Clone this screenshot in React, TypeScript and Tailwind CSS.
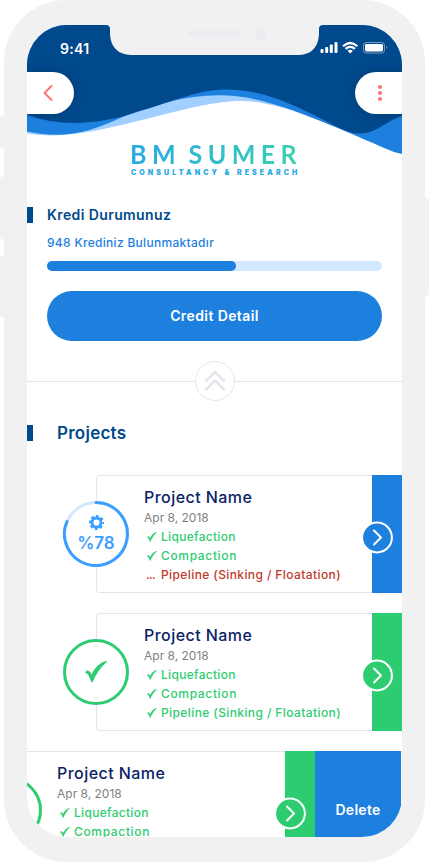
import React from "react";

const projects = [
  { done: false, items: ["Liquefaction", "Compaction", "Pipeline (Sinking / Floatation)"] },
  { done: true, items: ["Liquefaction", "Compaction", "Pipeline (Sinking / Floatation)"] },
];

function Waves() {
  return (
    <svg className="absolute left-0 top-0" width="375" height="140" viewBox="27 25 375 140">
      <path fill="#a1cfff" d="M27 25V133.500C65 140 105 129 150 118C200 105 233 97 262 103C290 108 320 120 345 130V25Z" />
      <path fill="#1d80df" d="M27 25V131.500C65 139 88 133 125 116C163 101 212 87 262 101C300 110 360 138 394 152L402 154V25Z" />
      <path fill="#00498d" d="M27 25V115C60 127 100 125 140 111C178 100 197 89.500 228 89.500C275 89.500 320 120 346 131C373 140 382 122 402 116V25Z" />
    </svg>
  );
}

function Check({ className, size = 10 }: { className?: string; size?: number }) {
  return (
    <svg className={className} width={size} height={size} viewBox="0 0 22 22" fill="currentColor" stroke="currentColor" strokeWidth="1" strokeLinejoin="round">
      <path d="M.5 11.500C2 9 5 9.500 6.500 14.500C10 7 15 1.500 21.500 .5C15 6.500 10.500 13 7 21.200C5 17 4 12 .5 11.500Z" />
    </svg>
  );
}

function Arrow({ green }: { green: boolean }) {
  return (
    <svg className="absolute -left-[11px] top-[46px]" width="33" height="33" viewBox="0 0 33 33">
      <circle cx="16" cy="16.500" r="14.900" fill={green ? "#2ecc71" : "#1d80df"} stroke="#fff" strokeWidth="2" />
      <path d="M13 9.500L20 16.500L13 23.500" fill="none" stroke="#fff" strokeWidth="2" strokeLinecap="round" strokeLinejoin="round" />
    </svg>
  );
}

function Details({ items, pending }: { items: string[]; pending?: boolean }) {
  return (
    <div className="flex flex-col pt-[9px]">
      <div className="h-6 whitespace-nowrap text-base font-medium leading-6 tracking-[0.45px] text-[#0b2265]">Project Name</div>
      <div className="h-[18px] text-xs leading-[18px] text-[#7f7f7f]">Apr 8, 2018</div>
      {items.map((item, i) => {
        const open = pending && i === 2;
        return (
          <div key={item} className={`flex h-[19px] items-center whitespace-nowrap text-xs font-medium ${open ? "text-[#c0392b]" : "text-[#2ecc71]"}`}>
            <span className="flex w-[17px] pl-[2px] tracking-[-0.6px]">{open ? "..." : <Check className="ml-px" />}</span>
            <span className={item === "Compaction" ? "tracking-[0.65px]" : item === "Liquefaction" ? "tracking-[0.3px]" : "tracking-[0.4px]"}>{item}</span>
          </div>
        );
      })}
    </div>
  );
}

export default function App() {
  return (
    <div className="relative h-[862px] w-[429px] overflow-hidden bg-white px-1 font-['Inter',sans-serif]">
      <i className="absolute left-0 top-[115px] h-[34px] w-3 rounded bg-[#f1f1f1]" />
      <i className="absolute left-0 top-[176px] h-[64px] w-3 rounded bg-[#f1f1f1]" />
      <i className="absolute left-0 top-[255px] h-[63px] w-3 rounded bg-[#f1f1f1]" />
      <i className="absolute right-0 top-[198px] h-[99px] w-3 rounded bg-[#f1f1f1]" />
      <div className="relative h-[862px] w-[421px] rounded-[62px] bg-[#f1f1f1] px-[23px] pt-[25px]">
        <div className="relative h-[812px] w-[375px] overflow-hidden rounded-[40px] bg-white">
          <Waves />
          <header className="relative flex h-[47px] justify-between">
            <span className="pl-[33px] pt-[14px] text-[14px] font-semibold leading-5 tracking-[0.3px] text-white">9:41</span>
            <svg className="absolute left-[79px] top-0" width="217" height="30" viewBox="0 0 217 30">
              <path fill="#f1f1f1" d="M0 0Q4 0 4 4V9Q5 29 25 30H193Q212 29 213 9V4Q213 0 217 0Z" />
              <rect x="82" y="6" width="53" height="6" rx="3" fill="#ebebf0" />
              <circle cx="155" cy="9" r="6" fill="#ebebf0" />
            </svg>
            <svg className="mr-[14px] mt-[16px]" width="68" height="14" viewBox="0 0 68 14" fill="white">
              <rect x="0.500" y="8" width="3" height="4" rx="1" /><rect x="5.200" y="6" width="3" height="6" rx="1" />
              <rect x="9.800" y="3.500" width="3" height="8.500" rx="1" /><rect x="14.500" y="1" width="3" height="11" rx="1" />
              <path fill="none" stroke="white" strokeWidth="2.200" d="M23 5.200Q30.200 -1.200 37.400 5.200M25.500 7.900Q30.200 3.900 34.900 7.900" />
              <path d="M27.500 9.800Q30.200 7.800 32.900 9.800L30.200 12.500Z" />
              <rect x="43.500" y="1.500" width="21" height="10.500" rx="2.700" fill="none" stroke="white" strokeOpacity=".45" />
              <rect x="45" y="3" width="18" height="7.500" rx="1.400" /><path opacity=".7" d="M66 5Q67.700 6.500 66 8Z" />
            </svg>
          </header>
          <nav className="relative flex h-[42px] justify-between">
            <button className="h-[42px] w-[47px] rounded-r-full bg-white pl-[16px] shadow-[0_0_10px_rgba(0,0,0,0.2)]">
              <svg width="10" height="18" viewBox="0 0 10 18"><path d="M8.500 2L1.500 9L8.500 16" fill="none" stroke="#ff7272" strokeWidth="2" strokeLinecap="round" strokeLinejoin="round" /></svg>
            </button>
            <button className="flex h-[42px] w-[47px] flex-col items-center justify-center gap-[2.300px] rounded-l-full bg-white pl-[2px] shadow-[0_0_10px_rgba(0,0,0,0.2)]">
              <i className="size-1 rounded-full bg-[#ff7272]" /><i className="size-1 rounded-full bg-[#ff7272]" /><i className="size-1 rounded-full bg-[#ff7272]" />
            </button>
          </nav>
          <div className="relative flex h-[76px] flex-col pl-[103px] pt-[26px]">
            <div className="h-[28px] w-[186px] origin-left scale-x-[0.945] whitespace-nowrap bg-gradient-to-r from-[#29aae2] to-[#3fd0ae] bg-clip-text font-['Lato',sans-serif] text-[26.500px] font-bold leading-[28px] tracking-[5.700px] text-transparent [word-spacing:-4px]">BM SUMER</div>
            <div className="h-2 whitespace-nowrap pl-px font-['Inter',sans-serif] text-[7px] font-black leading-[10px] tracking-[3.100px] text-[#29aae2]">CONSULTANCY &amp; RESEARCH</div>
          </div>
          <section className="flex flex-col">
            <div className="mt-[17px] flex h-4 items-center gap-[14px]">
              <i className="h-4 w-[6px] bg-[#00498d]" />
              <h2 className="whitespace-nowrap text-[14px] font-semibold leading-4 tracking-[0.4px] text-[#00498d]">Kredi Durumunuz</h2>
            </div>
            <p className="ml-5 mt-[11px] h-[18px] whitespace-nowrap text-xs font-medium leading-[18px] tracking-[0.3px] text-[#1d80df]">948 Krediniz Bulunmaktadır</p>
            <div className="mx-5 mt-[9px] h-[10px] rounded-full bg-[#d2e8ff]"><div className="h-full w-[189px] rounded-full bg-[#1d80df]" /></div>
            <button className="mx-5 mt-5 h-[50px] rounded-full bg-[#1d80df] pb-px text-[14px] font-semibold tracking-[0.4px] text-white">Credit Detail</button>
            <div className="mt-5 flex h-10 items-center">
              <i className="h-px w-[168px] bg-[#e4e4ea]" />
              <svg width="40" height="40" viewBox="0 0 40 40" fill="none">
                <circle cx="20" cy="20" r="19.500" stroke="#e6e6ee" />
                <path d="M11 20L20 11L29 20M11 28.500L20 19.500L29 28.500" stroke="#e6e6ee" strokeWidth="2.600" strokeLinecap="round" strokeLinejoin="round" />
              </svg>
              <i className="h-px flex-1 bg-[#e4e4ea]" />
            </div>
          </section>
          <section className="flex flex-col">
            <div className="mt-6 flex h-4 items-center gap-6">
              <i className="h-4 w-[6px] bg-[#00498d]" />
              <h2 className="text-[17px] font-semibold leading-4 tracking-[0.25px] text-[#00498d]">Projects</h2>
            </div>
            <div className="mt-[34px] flex flex-col gap-5">
              {projects.map((p, i) => (
                <article key={i} className="relative ml-[69px] flex h-[118px] justify-between rounded-l border border-r-0 border-[#e4e4ea] pl-[47px]">
                  <div className="absolute -left-[34px] top-[25px] size-[66px] rounded-full bg-white">
                    <svg className="absolute" width="66" height="66" viewBox="0 0 66 66" fill="none">
                      <circle cx="33" cy="33" r="31.500" stroke={p.done ? "#2ecc71" : "#d2e8ff"} strokeWidth="3" />
                      {!p.done && <path d="M33 1.500A31.500 31.500 0 1 1 4 20.500" stroke="#3d9eff" strokeWidth="3" strokeLinecap="round" />}
                    </svg>
                    {p.done ? (
                      <Check className="absolute left-[22px] top-[22px] text-[#2ecc71]" size={22} />
                    ) : (
                      <div className="flex flex-col items-center pt-[14px] text-[#3d9eff]">
                        <svg width="15" height="15" viewBox="0 0 14 14" fill="none" stroke="currentColor">
                          <circle cx="7" cy="7" r="4.200" strokeWidth="2.600" />
                          <circle cx="7" cy="7" r="6" strokeWidth="2" strokeDasharray="2.700 2.012" strokeDashoffset="1.350" />
                        </svg>
                        <span className="pt-px text-[17px] font-semibold leading-6">%78</span>
                      </div>
                    )}
                  </div>
                  <Details items={p.items} pending={!p.done} />
                  <div className={`relative -my-px w-[30px] ${p.done ? "bg-[#2ecc71]" : "bg-[#1d80df]"}`}><Arrow green={p.done} /></div>
                </article>
              ))}
              <article className="relative flex h-[118px] border-t border-[#e4e4ea] pl-[30px]">
                <svg className="absolute -left-[51px] top-[25px]" width="66" height="66" viewBox="0 0 66 66" fill="none"><circle cx="33" cy="33" r="31.500" stroke="#2ecc71" strokeWidth="3" /></svg>
                <div className="w-[228px]"><Details items={["Liquefaction", "Compaction"]} /></div>
                <div className="relative -mt-px w-[30px] bg-[#2ecc71]"><Arrow green /></div>
                <div className="-mt-px flex w-[86px] items-center justify-center bg-[#1d80df] pb-px text-[14px] font-semibold tracking-[0.3px] text-white">Delete</div>
              </article>
            </div>
          </section>
        </div>
      </div>
    </div>
  );
}
